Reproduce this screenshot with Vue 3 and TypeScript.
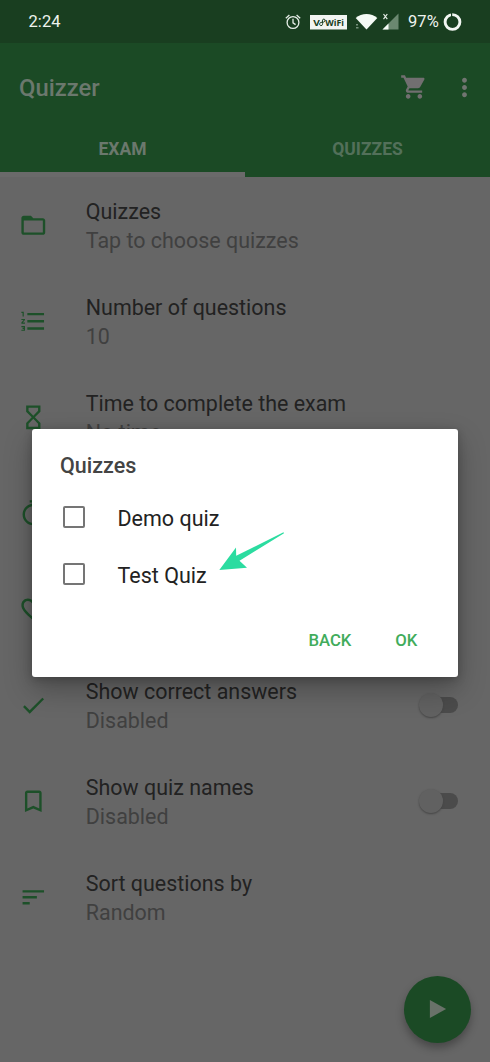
<script setup lang="ts">
interface Setting {
  icon: string
  title?: string
  detail?: string
  toggle?: boolean
}

const settings: Setting[] = [
  { icon: 'M20 6h-8l-2-2H4c-1.1 0-1.99.9-1.99 2L2 18c0 1.1.9 2 2 2h16c1.1 0 2-.9 2-2V8c0-1.1-.9-2-2-2zm0 12H4V8h16v10z', title: 'Quizzes', detail: 'Tap to choose quizzes' },
  { icon: 'M2 17h2v.5H3v1h1v.5H2v1h3v-4H2v1zm1-9h1V4H2v1h1v3zm-1 3h1.8L2 13.1v.9h3v-1H3.2L5 10.9V10H2v1zm5-6v2h14V5H7zm0 14h14v-2H7v2zm0-6h14v-2H7v2z', title: 'Number of questions', detail: '10' },
  { icon: 'M6 2v5.300L10.700 12 6 16.700V22h12v-5.300L13.300 12 18 7.300V2H6zm2 2h8v2.500l-4 4.200-4-4.200V4zm4 9.300l4 4.200V20H8v-2.500l4-4.200z', title: 'Time to complete the exam', detail: 'No time' },
  { icon: 'M15 1H9v2h6V1zm4.030 6.390l1.420-1.420c-.43-.51-.9-.99-1.410-1.410l-1.420 1.420C16.070 4.740 14.120 4 12 4c-4.970 0-9 4.030-9 9s4.020 9 9 9 9-4.030 9-9c0-2.120-.74-4.070-1.970-5.610zM12 20c-3.870 0-7-3.130-7-7s3.130-7 7-7 7 3.130 7 7-3.130 7-7 7z' },
  { icon: 'M16.500 3c-1.740 0-3.410.81-4.500 2.090C10.910 3.810 9.240 3 7.500 3 4.420 3 2 5.420 2 8.500c0 3.780 3.400 6.860 8.550 11.540L12 21.350l1.450-1.320C18.600 15.360 22 12.280 22 8.500 22 5.420 19.580 3 16.500 3zm-4.400 15.550l-.1.1-.1-.1C7.140 14.240 4 11.390 4 8.500 4 6.500 5.500 5 7.500 5c1.540 0 3.040.99 3.570 2.360h1.870C13.460 5.990 14.960 5 16.500 5c2 0 3.500 1.500 3.500 3.500 0 2.890-3.140 5.740-7.900 10.050z' },
  { icon: 'M9 16.170L4.830 12l-1.420 1.410L9 19 21 7l-1.410-1.410z', title: 'Show correct answers', detail: 'Disabled', toggle: true },
  { icon: 'M17 3H7c-1.100 0-1.990.9-1.990 2L5 21l7-3 7 3V5c0-1.100-.9-2-2-2zm0 15l-5-2.180L7 18V5h10v13z', title: 'Show quiz names', detail: 'Disabled', toggle: true },
  { icon: 'M3 18h6v-2H3v2zM3 6v2h18V6H3zm0 7h12v-2H3v2z', title: 'Sort questions by', detail: 'Random' },
]

const choices: string[] = ['Demo quiz', 'Test Quiz']
</script>

<template>
  <div class="screen">
    <div class="status">
      <span class="clock">2:24</span>
      <svg class="tray" width="200" height="43" viewBox="270 0 200 43">
        <g fill="none" stroke="#e6ede7" stroke-width="1.300">
          <circle cx="293" cy="22.500" r="5.900" />
          <path d="M293 18.800v4l2.600 1.800M285.800 18.200l3.600-3.200M300.200 18.200l-3.600-3.200" />
        </g>
        <rect x="310" y="15" width="37" height="14.500" fill="#f2f5f2" />
        <g class="badge-text" fill="#193d20">
          <text x="313.300" y="26" textLength="6.600" lengthAdjust="spacingAndGlyphs">V</text>
          <text x="325.300" y="26" textLength="18.700" lengthAdjust="spacingAndGlyphs">WiFi</text>
        </g>
        <path d="M322 22.300c-2.600-.6-3.200 3.300-1 3.300 1.900 0 1.700-2.100 1.500-3.300-.3-2.200.1-3.200 1.400-3.200 1.700 0 1.300 2.800-.5 3.100z" fill="none" stroke="#193d20" stroke-width="1" />
        <path d="M355.700 18.100C361.500 12.600 371.500 12.600 377.300 18.100L366.500 29.500z" fill="#f5faf5" />
        <path d="M356 24h2v1.500h-2zM356 27h2.500v1.500H356z" fill="#75907a" />
        <path d="M398.500 13.500v16h-16z" fill="#6b8870" />
        <path d="M388.500 23.500v6h-6z" fill="#f5faf5" />
        <path d="M383.500 14l3.800 5.200M387.300 14l-3.800 5.200" stroke="#e6ede7" stroke-width="1.200" />
        <circle cx="452.500" cy="22" r="7.400" fill="none" stroke="#f2f6f2" stroke-width="2.900" />
        <path d="M451.600 13v4.500" stroke="#193d20" stroke-width="1.200" />
      </svg>
      <span class="percent">97%</span>
    </div>

    <header class="bar">
      <div class="toolbar">
        <h1>Quizzer</h1>
        <svg class="cart" viewBox="0 0 24 24"><path d="M7 18c-1.100 0-1.990.9-1.990 2S5.900 22 7 22s2-.9 2-2-.9-2-2-2zM1 2v2h2l3.600 7.590-1.350 2.450c-.16.28-.25.61-.25.96 0 1.100.9 2 2 2h12v-2H7.420c-.14 0-.25-.11-.25-.25l.03-.12.9-1.630h7.450c.75 0 1.410-.41 1.750-1.030l3.580-6.490C20.950 5.340 21 5.170 21 5c0-.55-.45-1-1-1H5.210l-.94-2H1zm16 16c-1.100 0-1.990.9-1.990 2s.89 2 1.990 2 2-.9 2-2-.9-2-2-2z" /></svg>
        <svg class="more" viewBox="0 0 24 24"><path d="M12 8c1.100 0 2-.9 2-2s-.9-2-2-2-2 .9-2 2 .9 2 2 2zm0 2c-1.100 0-2 .9-2 2s.9 2 2 2 2-.9 2-2-.9-2-2-2zm0 6c-1.100 0-2 .9-2 2s.9 2 2 2 2-.9 2-2-.9-2-2-2z" /></svg>
      </div>
      <nav class="tabs">
        <div class="tab active"><span>EXAM</span></div>
        <div class="tab"><span>QUIZZES</span></div>
      </nav>
    </header>

    <main>
      <div v-for="(s, i) in settings" :key="i" class="row">
        <svg class="icon" viewBox="0 0 24 24"><path :d="s.icon" /></svg>
        <div class="text">
          <div class="title">{{ s.title }}</div>
          <div class="detail">{{ s.detail }}</div>
        </div>
        <div v-if="s.toggle" class="switch"><i></i></div>
      </div>
    </main>

    <button class="fab" aria-label="Start">
      <svg viewBox="0 0 20 22"><path d="M1 1v20l18-10z" /></svg>
    </button>

    <section class="dialog">
      <h2>Quizzes</h2>
      <label v-for="c in choices" :key="c" class="choice">
        <span class="box"></span><span>{{ c }}</span>
      </label>
      <div class="actions"><span class="back">BACK</span><span class="ok">OK</span></div>
    </section>
    <svg class="arrow" viewBox="0 0 66 40"><path d="M0.300 38L17 15.500L17.200 23.800L64.500 .300L65 1.300L20.500 28.800L28 35.800z" /></svg>
  </div>
</template>

<style>
body { margin: 0; background: #666; }
</style>

<style scoped>
.screen {
  position: relative;
  width: 490px;
  height: 1062px;
  overflow: hidden;
  background: #666;
  font-family: Roboto, sans-serif;
}
.status {
  position: relative;
  display: flex;
  align-items: center;
  height: 43px;
  background: #193e20;
  color: #eef3ee;
}
.clock { margin-left: 28.500px; font-size: 16.500px; letter-spacing: .1px; }
.tray { position: absolute; left: 270px; top: 0; }
.badge-text { font: 700 9.500px "Open Sans", sans-serif; }
.percent { position: absolute; left: 408px; font-size: 16.500px; letter-spacing: .1px; }
.bar { height: 134px; background: #1b4a25; color: #6b786d; }
.toolbar { display: flex; align-items: center; height: 88px; }
h1 { margin: 2px auto 0 19px; font-size: 23.800px; font-weight: 500; }
.cart { width: 28px; height: 28px; fill: #716f70; }
.more { width: 29px; height: 29px; margin: 0 11.500px 0 21.500px; fill: #717571; }
.tabs { display: flex; height: 46px; }
.tab {
  flex: 1;
  box-sizing: border-box;
  padding-top: 7px;
  text-align: center;
  font-size: 17.500px;
  font-weight: 700;
  line-height: 22px;
  color: #53705a;
}
.active { border-bottom: 5px solid #6a6a6a; color: #6b786d; }
.row { display: flex; align-items: center; height: 96px; }
.icon { width: 28.600px; height: 28.600px; margin-left: 18.700px; fill: #1d5029; }
.text { flex: 1; padding-top: 2px; margin-left: 38.500px; font-size: 21.450px; line-height: 29px; white-space: nowrap; }
.title { color: #222; }
.detail { color: #404040; }
.switch { position: relative; width: 34px; height: 16px; margin-right: 32px; border-radius: 8px; background: #4b4b4b; }
.switch i { position: absolute; left: -5px; top: -4px; width: 24px; height: 24px; border-radius: 50%; background: #616161; box-shadow: 0 1px 2px #444; }
.fab {
  position: absolute;
  left: 404px;
  top: 976px;
  width: 67px;
  height: 67px;
  padding: 0;
  border: 0;
  border-radius: 50%;
  background: #1b4a25;
  box-shadow: 0 5px 9px rgba(0, 0, 0, .3);
}
.fab svg { width: 18px; height: 20px; margin-top: 2px; fill: #697269; }
.dialog {
  position: absolute;
  left: 31.600px;
  top: 428.500px;
  box-sizing: border-box;
  width: 426.800px;
  height: 248.200px;
  padding-top: 22.500px;
  border-radius: 3px;
  background: #fff;
  box-shadow: 0 12px 28px rgba(0, 0, 0, .28), 0 2px 8px rgba(0, 0, 0, .22);
}
h2 { margin: 0 0 9px 28.400px; font-size: 21.500px; font-weight: 500; line-height: 29px; color: #444; }
.choice { display: flex; align-items: center; height: 57px; font-size: 21.500px; color: #222; }
.choice span:last-child { padding-top: 1px; }
.box { box-sizing: border-box; width: 22px; height: 22px; margin: -1px 32px 0 31.900px; border: 2.400px solid #757575; border-radius: 2px; }
.actions { display: flex; justify-content: flex-end; margin-top: 27px; padding-right: 41px; font-size: 16.700px; font-weight: 500; line-height: 22px; color: #41ac5b; }
.ok { margin-left: 44px; }
.arrow { position: absolute; left: 219px; top: 532px; width: 66px; height: 40px; fill: #2bdca0; }
</style>
